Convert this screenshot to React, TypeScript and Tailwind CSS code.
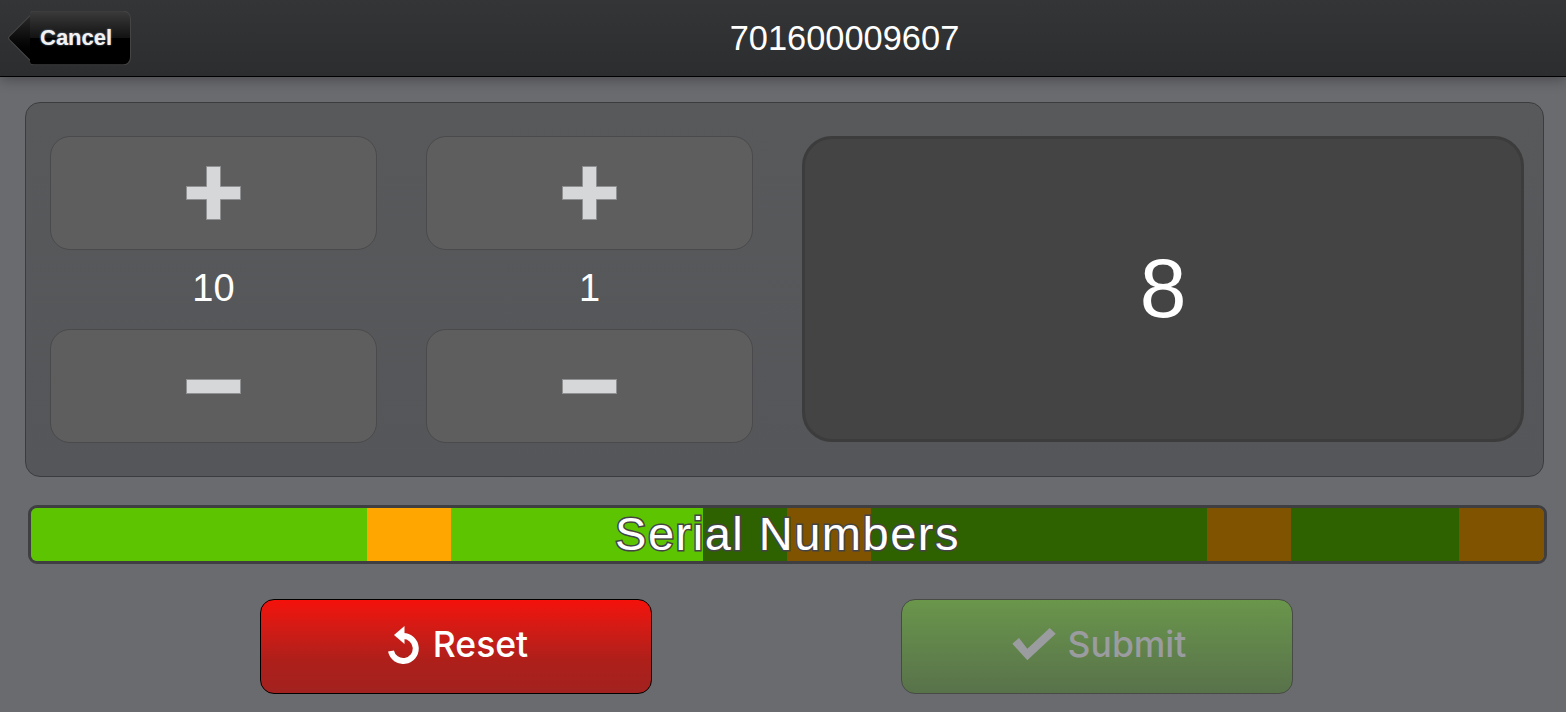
import React from "react";

const segments = [
  { units: 4, color: "bg-[#5cc400]" },
  { units: 1, color: "bg-[#ffa600]" },
  { units: 3, color: "bg-[#5cc400]" },
  { units: 1, color: "bg-[#2e6200]" },
  { units: 1, color: "bg-[#805300]" },
  { units: 4, color: "bg-[#2e6200]" },
  { units: 1, color: "bg-[#805300]" },
  { units: 2, color: "bg-[#2e6200]" },
  { units: 1, color: "bg-[#805300]" },
];

function PlusIcon() {
  return (
    <svg width="55" height="54" viewBox="0 0 55 54" className="fill-[#d6d7d9] stroke-[#8f9092]">
      <path d="M20.5.5h14v20h20v13h-20v20h-14v-20H.5v-13h20z" />
    </svg>
  );
}

function MinusIcon() {
  return (
    <svg width="55" height="15" viewBox="0 0 55 15" className="fill-[#d6d7d9] stroke-[#8f9092]">
      <rect x="0.5" y="0.5" width="54" height="14" />
    </svg>
  );
}

function ResetIcon() {
  return (
    <svg width="31" height="38" viewBox="0 0 31 38" className="fill-white">
      <path d="M15 10A12.5 12.5 0 1 1 3 25" fill="none" stroke="white" strokeWidth="6" />
      <path d="M6 9 16.5 0v18z" />
    </svg>
  );
}

function CheckIcon() {
  return (
    <svg width="44" height="33" viewBox="0 0 44 33" className="fill-[#9b9ca0]">
      <path d="M.3 15.7 15.3 32.3 43.7 5.7 37.7 0 15.3 20.7 7 10z" />
    </svg>
  );
}

function StepButton({ children }: { children: React.ReactNode }) {
  return (
    <button className="flex h-[114px] w-[327px] items-center justify-center rounded-[20px] border border-[#4a4a4c] bg-[#5e5e5e]">
      {children}
    </button>
  );
}

function Stepper({ label }: { label: string }) {
  return (
    <div className="flex w-[327px] flex-col">
      <StepButton>
        <PlusIcon />
      </StepButton>
      <div className="flex h-[79px] items-center justify-center pb-[2px] text-[38px] text-white">{label}</div>
      <StepButton>
        <MinusIcon />
      </StepButton>
    </div>
  );
}

export default function App() {
  return (
    <div className="h-[712px] w-[1566px] overflow-hidden bg-[#6a6b6f] font-['Liberation_Sans',sans-serif]">
      {/* Header */}
      <header className="relative flex h-[77px] items-center border-b border-black bg-gradient-to-b from-[#343536] to-[#2c2d2f] pl-[8px] pr-[8px] shadow-[0_3px_12px_rgba(0,0,0,0.3)]">
        <div className="relative h-[55px] w-[123px] shrink-0 -translate-y-[0.5px]">
          <div className="absolute left-[7px] top-[8px] h-[39px] w-[39px] rotate-45 rounded-[3px] border border-[#444] bg-gradient-to-br from-[#2f2f2f] via-[#0c0c0c] via-50% to-black" />
          <button className="absolute left-[22px] top-0 flex h-[55px] w-[101px] items-center rounded-l-[4px] rounded-r-[8px] border border-l-0 border-[#444] bg-[linear-gradient(#3a3a3a,#121212_50%,#000_50%,#000)] pb-[2px] pl-[10px] text-[22px] font-bold text-[#f2f2f2] [text-shadow:0_0_2px_rgba(170,210,255,0.7)]">
            Cancel
          </button>
        </div>
        <h1 className="flex-1 pt-[1px] text-center text-[34.4px] font-normal text-white">701600009607</h1>
      </header>

      {/* Counter panel */}
      <section className="ml-[25px] mt-[25px] flex h-[375px] w-[1519px] gap-[49px] rounded-[15px] border border-[#3c3c3e] bg-gradient-to-b from-[#58595b] to-[#555659] pl-[24px] pt-[33px]">
        <Stepper label="10" />
        <Stepper label="1" />
        <div className="flex h-[306px] w-[722px] items-center justify-center rounded-[30px] border-[3px] border-[#3c3c3c] bg-[#444444] pb-[3px] text-[84px] text-white">
          8
        </div>
      </section>

      {/* Progress bar */}
      <div className="relative ml-[28px] mt-[28px] flex h-[59px] w-[1519px] overflow-hidden rounded-[9px] border-[3px] border-[#3f3f42]">
        {segments.map((s, i) => (
          <div
            key={i}
            className={i === segments.length - 1 ? `${s.color} flex-1` : s.color}
            style={i === segments.length - 1 ? undefined : { width: s.units * 84 }}
          />
        ))}
        <div
          className="absolute inset-0 flex items-center justify-center text-[47px] tracking-[1.5px] text-white [-webkit-text-stroke:3px_#444] [paint-order:stroke_fill]"
        >
          Serial Numbers
        </div>
      </div>

      {/* Actions */}
      <div className="ml-[260px] mt-[35px] flex gap-[249px] font-['Inter','Liberation_Sans',sans-serif]">
        <button className="flex h-[95px] w-[392px] items-center justify-center gap-[14px] rounded-[14px] border border-black bg-gradient-to-b from-[#f4110a] via-[#ae1f1a] via-65% to-[#a2221f] pb-[4px] pl-[4px] text-[35.5px] font-medium text-white">
          <ResetIcon />
          Reset
        </button>
        <button className="flex h-[95px] w-[392px] items-center justify-center gap-[12px] rounded-[14px] border border-[#474a45] bg-gradient-to-b from-[#6a964b] to-[#58724a] pb-[4px] pl-[4px] text-[35.5px] font-medium text-[#9b9ca0]">
          <CheckIcon />
          Submit
        </button>
      </div>
    </div>
  );
}
